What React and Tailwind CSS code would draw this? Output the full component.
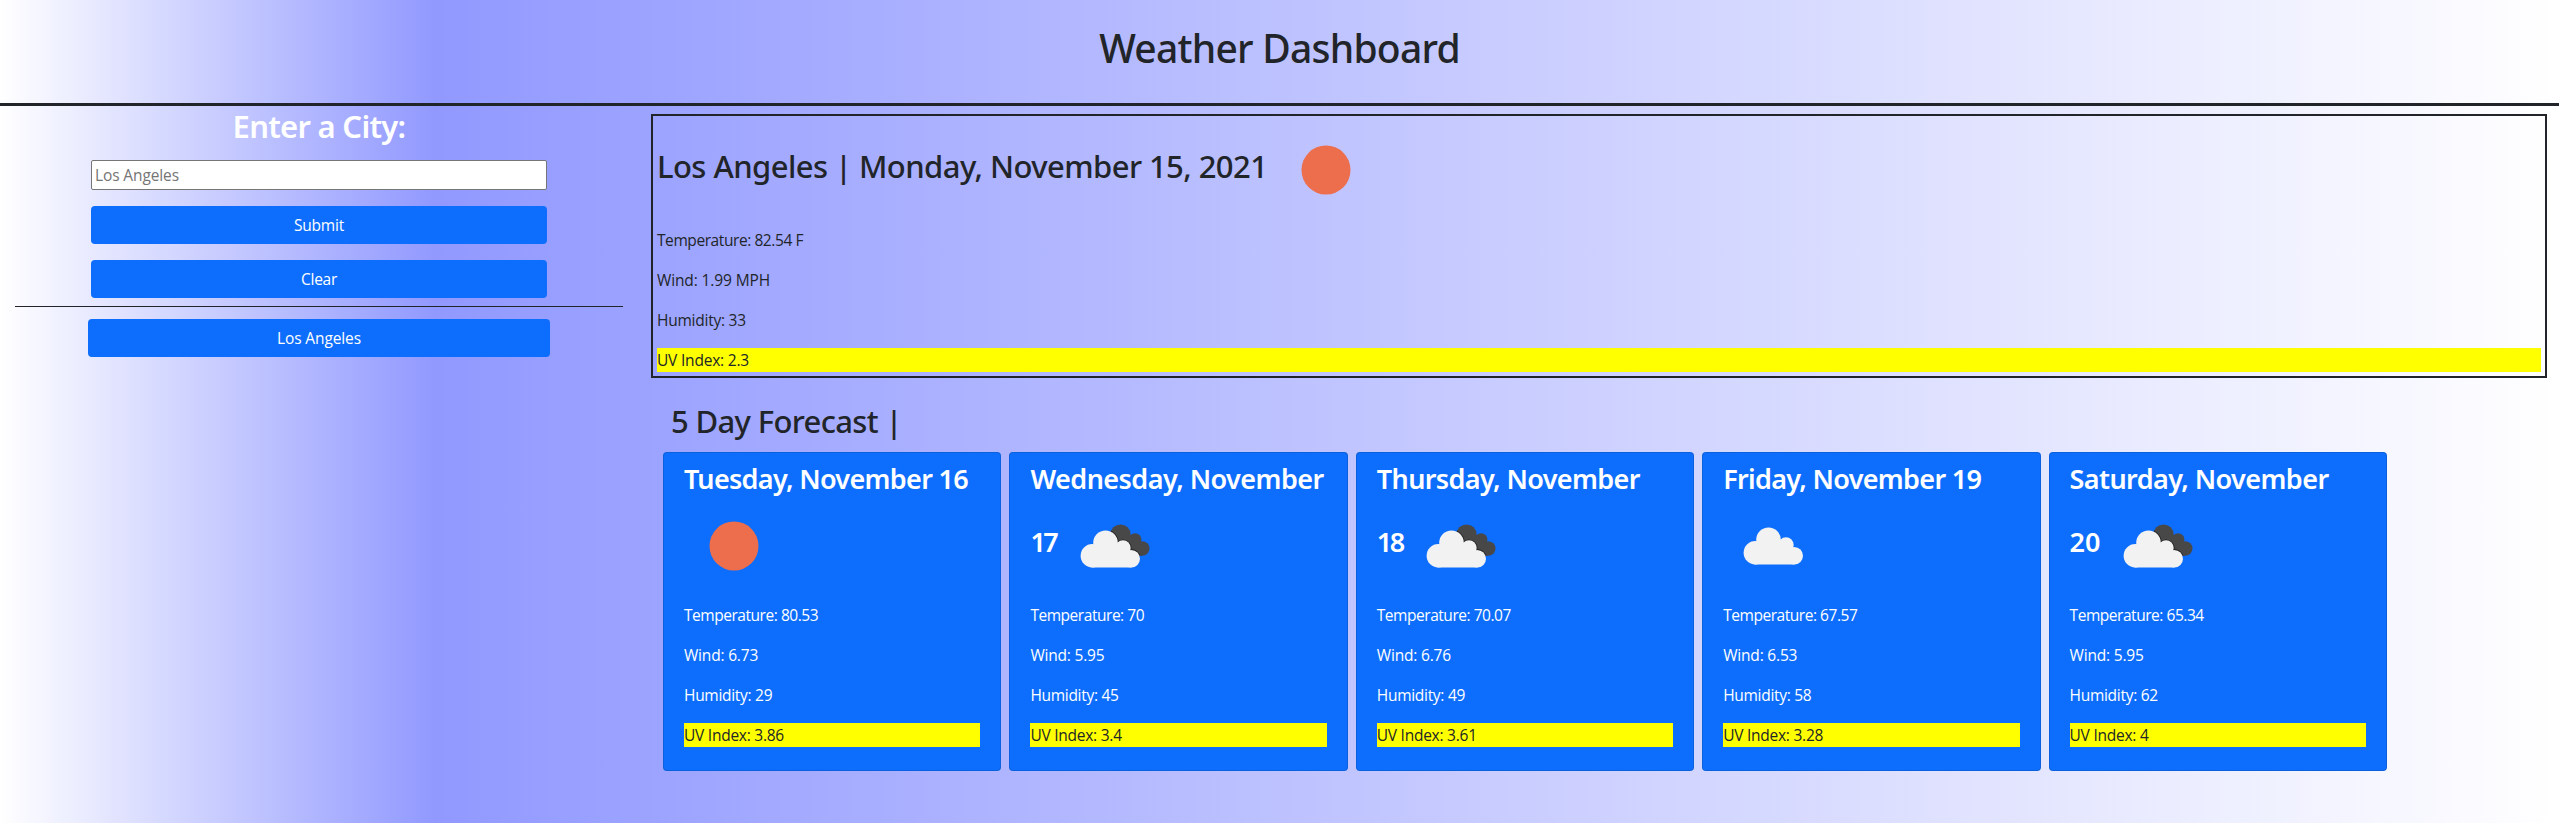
import React, { useId } from "react";

function WhiteCloud() {
  return (
    <g fill="#f2f2f2">
      <circle cx="31.8" cy="54.3" r="11.7" />
      <circle cx="45" cy="41.3" r="12.3" />
      <circle cx="62.5" cy="46.5" r="7.7" />
      <circle cx="70.7" cy="57.3" r="8.8" />
      <path d="M32 45H64L71 52V66H31Z" />
    </g>
  );
}

function DarkShapes() {
  return (
    <>
      <circle cx="60" cy="33" r="10.1" />
      <circle cx="74.6" cy="38" r="6.3" />
      <circle cx="81.7" cy="47" r="7.3" />
      <path d="M60 33L75 34L82 50L81.7 54.3L70 54Z" />
    </>
  );
}

function BrokenClouds() {
  const clip = useId();
  return (
    <svg className="size-[100px] shrink-0" viewBox="4.5 -5.5 100 100">
      <clipPath id={clip}>
        <DarkShapes />
      </clipPath>
      <g fill="#484849">
        <DarkShapes />
      </g>
      <g fill="#222223" clipPath={`url(#${clip})`}>
        <circle cx="45" cy="41.3" r="13.2" />
        <circle cx="62.5" cy="46.5" r="8.6" />
        <circle cx="70.7" cy="57.3" r="9.7" />
      </g>
      <WhiteCloud />
    </svg>
  );
}

function WeatherIcon({ kind }) {
  if (kind === "sun") {
    return (
      <svg className="size-[100px] shrink-0" viewBox="0 0 100 100">
        <circle cx="50" cy="50" r="24.5" fill="#ec6e4c" />
      </svg>
    );
  }
  if (kind === "cloud") {
    return (
      <svg className="size-[100px] shrink-0" viewBox="-0.5 -2.5 100 100">
        <WhiteCloud />
      </svg>
    );
  }
  return <BrokenClouds />;
}

const days = [
  { title: "Tuesday, November 16", track: "tracking-[-0.68px]", rest: "", icon: "sun", temp: "80.53", wind: "6.73", hum: "29", uv: "3.86" },
  { title: "Wednesday, November", track: "tracking-[-0.54px]", rest: "17", restClass: "w-[34.5px] tracking-[-2.6px]", icon: "broken", temp: "70", wind: "5.95", hum: "45", uv: "3.4" },
  { title: "Thursday, November", track: "tracking-[-0.62px]", rest: "18", restClass: "w-[34.5px] tracking-[-2.6px]", icon: "broken", temp: "70.07", wind: "6.76", hum: "49", uv: "3.61" },
  { title: "Friday, November 19", track: "tracking-[-0.69px]", rest: "", icon: "cloud", temp: "67.57", wind: "6.53", hum: "58", uv: "3.28" },
  { title: "Saturday, November", track: "tracking-[-0.58px]", rest: "20", restClass: "w-[38px] tracking-[0px]", icon: "broken", temp: "65.34", wind: "5.95", hum: "62", uv: "4" },
];

function DayCard({ day }) {
  return (
    <article className="h-[319px] w-[338.4px] rounded border border-black/[.125] bg-[#0d6efd] px-5 pt-[9px] text-white">
      <h3 className={`font-['Noto_Sans',sans-serif] text-[27px] leading-[33.5px] font-semibold whitespace-nowrap ${day.track}`}>
        {day.title}
      </h3>
      <div className="mb-[7px] flex h-[100px] items-center">
        {day.rest && (
          <span className={`mb-2 shrink-0 font-['Noto_Sans',sans-serif] text-[27px] leading-[33.5px] font-semibold ${day.restClass}`}>
            {day.rest}
          </span>
        )}
        <WeatherIcon kind={day.icon} />
      </div>
      <div className="flex flex-col gap-4">
        <p className="tracking-[-0.46px]">Temperature: {day.temp}</p>
        <p className="tracking-[-0.19px]">Wind: {day.wind}</p>
        <p className="tracking-[-0.29px]">Humidity: {day.hum}</p>
        <p className="bg-[#ffff00] tracking-[-0.25px] text-[#212529]">UV Index: {day.uv}</p>
      </div>
    </article>
  );
}

export default function App() {
  return (
    <div className="flex h-[823px] flex-col bg-[linear-gradient(to_right,#ffffff_0%,#9199ff_17%,#ffffff_100%)] font-['Open_Sans',sans-serif] text-[15.5px] leading-6 text-[#212529]">
      <header className="h-[106px] shrink-0 border-b-3 border-[#212529] pt-6 text-center">
        <h1 className="font-['Noto_Sans',sans-serif] text-[39px] leading-[48px] font-medium tracking-[-0.75px]">Weather Dashboard</h1>
      </header>
      <div className="flex flex-1">
        <aside className="w-[638px] shrink-0 pt-px pr-[15px] pl-[15px]">
          <h2 className="text-center font-['Noto_Sans',sans-serif] text-[31px] leading-[38px] font-semibold tracking-[-0.72px] text-white">Enter a City:</h2>
          <div className="mx-[76px] mt-[15px] flex flex-col gap-4">
            <input
              className="h-[30px] rounded-[2px] border border-[#767676] bg-white px-[3px] tracking-[-0.12px] placeholder:text-[#757575]"
              placeholder="Los Angeles"
            />
            <button className="h-[38px] rounded bg-[#0d6efd] tracking-[-0.2px] text-white">Submit</button>
            <button className="h-[38px] rounded bg-[#0d6efd] tracking-[-0.26px] text-white">Clear</button>
          </div>
          <div className="mt-2 h-px bg-[#212529]" />
          <button className="mt-3 ml-[73px] block h-[38px] w-[462px] rounded bg-[#0d6efd] tracking-[-0.12px] text-white">Los Angeles</button>
        </aside>
        <main className="flex-1 pt-2">
          <section className="mr-3 ml-[13px] h-[264px] border-2 border-[#212529] p-1">
            <div className="mb-[8px] flex h-[100px] items-center gap-[10px]">
              <h2 className="mb-2 w-[609px] font-['Noto_Sans',sans-serif] text-[31px] leading-[38px] font-medium tracking-[-0.56px] whitespace-nowrap">
                Los Angeles | Monday, November 15, 2021
              </h2>
              <WeatherIcon kind="sun" />
            </div>
            <div className="flex flex-col gap-4">
              <p className="tracking-[-0.42px]">Temperature: 82.54 F</p>
              <p className="tracking-[-0.12px]">Wind: 1.99 MPH</p>
              <p className="tracking-[-0.24px]">Humidity: 33</p>
              <p className="bg-[#ffff00] tracking-[-0.2px]">UV Index: 2.3</p>
            </div>
          </section>
          <section className="pt-6 pl-[25px]">
            <h2 className="mb-[11px] ml-2 font-['Noto_Sans',sans-serif] text-[31px] leading-[39px] font-medium tracking-[-0.65px]">5 Day Forecast |</h2>
            <div className="flex gap-2">
              {days.map((day) => (
                <DayCard key={day.title} day={day} />
              ))}
            </div>
          </section>
        </main>
      </div>
    </div>
  );
}
